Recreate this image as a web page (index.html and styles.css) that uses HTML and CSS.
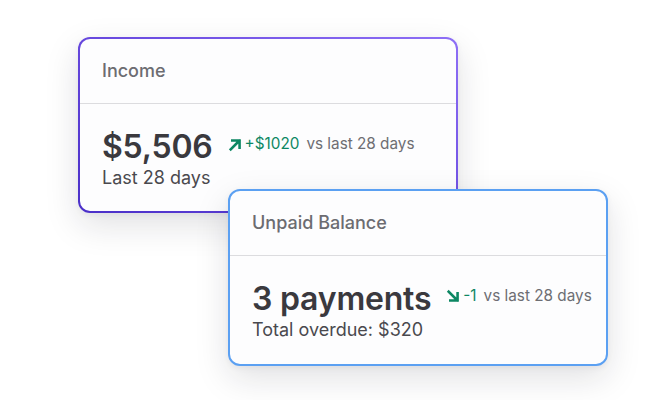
FILE: index.html
```html
<!DOCTYPE html>
<html>
<head>
<meta charset="utf-8">
<link rel="stylesheet" href="styles.css">
</head>
<body>
<div class="stage">
  <div class="card card-income">
    <div class="card-head">Income</div>
    <div class="card-body">
      <div class="row">
        <span class="value">$5,506</span>
        <span class="delta">
          <svg class="arrow" viewBox="0 0 14 14" width="15" height="15"><path d="M2.5 11.5 L10.5 3.5 M4 3.2 H10.8 V10" fill="none" stroke="currentColor" stroke-width="2.4" stroke-linecap="square"/></svg>
          <span class="delta-num">+$1020</span>
          <span class="delta-note">vs last 28 days</span>
        </span>
      </div>
      <div class="sub">Last 28 days</div>
    </div>
  </div>
  <div class="card card-unpaid">
    <div class="card-head">Unpaid Balance</div>
    <div class="card-body">
      <div class="row">
        <span class="value">3 payments</span>
        <span class="delta">
          <svg class="arrow" viewBox="0 0 14 14" width="15" height="15"><path d="M2.5 2.5 L10.5 10.5 M4 10.8 H10.8 V4" fill="none" stroke="currentColor" stroke-width="2.4" stroke-linecap="square"/></svg>
          <span class="delta-num">-1</span>
          <span class="delta-note">vs last 28 days</span>
        </span>
      </div>
      <div class="sub">Total overdue: $320</div>
    </div>
  </div>
</div>
</body>
</html>
```
FILE: styles.css
```css
html, body {
  margin: 0;
  padding: 0;
  background: #ffffff;
}
body {
  width: 670px;
  height: 400px;
  overflow: hidden;
  font-family: Inter, "Noto Sans", sans-serif;
}
.stage {
  display: flex;
  flex-direction: column;
  padding: 37px 0 0 78px;
}
.card {
  position: relative;
  box-sizing: border-box;
  width: 380px;
  border-radius: 12px;
  border: 2px solid transparent;
  box-shadow: 0 12px 34px rgba(20, 20, 40, 0.13), 0 2px 6px rgba(20, 20, 40, 0.05);
}
.card-income {
  height: 176px;
  background: linear-gradient(#fdfdfe, #fdfdfe) padding-box,
              linear-gradient(30deg, #4a2fc8 0%, #6a4be0 50%, #8e6ff6 100%) border-box;
}
.card-unpaid {
  height: 177px;
  margin: -24px 0 0 150px;
  border-color: #5ba0f2;
  background: #fdfdfe;
}
.card-head {
  height: 65px;
  padding: 21px 0 0 22px;
  box-sizing: border-box;
  font-size: 18px;
  font-weight: 500;
  color: #6c6c71;
  border-bottom: 1px solid #dcdcdf;
  line-height: 22px;
}
.card-body {
  padding: 24px 0 0 22px;
}
.row {
  display: flex;
  align-items: flex-start;
}
.value {
  font-size: 32px;
  font-weight: 600;
  color: #3a393e;
  line-height: 38px;
  letter-spacing: -0.2px;
}
.delta {
  display: flex;
  align-items: center;
  margin: 7px 0 0 15px;
  font-size: 15.3px;
  line-height: 18px;
}
.arrow {
  color: #0d8763;
  margin-right: 2px;
}
.delta-num {
  color: #0d8763;
  margin-right: 7px;
}
.delta-note {
  color: #6e6e73;
}
.sub {
  font-size: 18px;
  line-height: 22px;
  color: #4a494e;
  margin-top: 1px;
}
```
